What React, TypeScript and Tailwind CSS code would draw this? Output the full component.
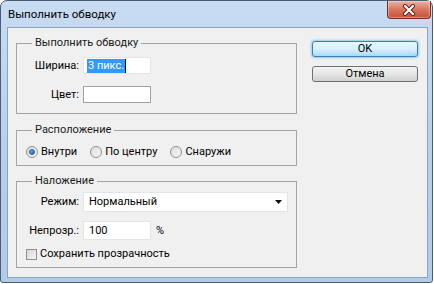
import React from "react";

function Radio({ checked, label, className = "" }: { checked?: boolean; label: string; className?: string }) {
  return (
    <div className={"flex items-center " + className}>
      <div className="w-[12px] h-[12px] rounded-full border border-[#8f8f8f] bg-gradient-to-br from-[#dcdcdc] to-[#f8f8f8] flex items-center justify-center">
        {checked && (
          <div className="w-[6px] h-[6px] rounded-full bg-gradient-to-br from-[#7ec0f5] to-[#0d5bb0] border border-[#1c5aa0]" />
        )}
      </div>
      <span className="ml-[3px] leading-[16px]">{label}</span>
    </div>
  );
}

function Group({ title, className = "", children }: { title: string; className?: string; children: React.ReactNode }) {
  return (
    <div className={"border border-[#a5a5a5] flex flex-col " + className}>
      <span className="-mt-[9px] ml-[15px] self-start px-[3px] h-[16px] leading-[16px] bg-[#f0f0f0] text-[#1b1b1b]">{title}</span>
      {children}
    </div>
  );
}

export default function App() {
  return (
    <div className="w-[434px] h-[284px] bg-white text-[11px] text-black font-['Roboto',sans-serif]">
      <div className="w-[433px] h-[283px] flex flex-col rounded-t-[7px] rounded-b-[3px] border border-[#4b5d74] bg-gradient-to-b from-[#c8dcf1] via-[#b7d0ec] to-[#b1cbe8]">
        {/* title bar */}
        <div className="h-[26px] flex items-start shrink-0">
          <span className="pl-[7px] pt-[5px] leading-[16px] text-[11.5px] text-black">Выполнить обводку</span>
          <div className="ml-auto mr-[1px] w-[44px] h-[18px] rounded-b-[4px] border border-t-0 border-[#7a2d1d] bg-gradient-to-b from-[#eab2a3] via-[#d8765f] to-[#c4502f] flex items-center justify-center shadow-[inset_0_0_1px_1px_rgba(255,255,255,0.35)]">
            <svg width="14" height="12" viewBox="0 0 14 12">
              <path d="M3 2 L11 10 M11 2 L3 10" stroke="#5b1f12" strokeWidth="4" strokeLinecap="round" />
              <path d="M3 2 L11 10 M11 2 L3 10" stroke="#ffffff" strokeWidth="2.2" strokeLinecap="round" />
            </svg>
          </div>
        </div>
        {/* client */}
        <div className="ml-[6px] mr-[4px] mb-[4px] flex-1 border border-[#8aa4c3] bg-[#f0f0f0] flex pl-[8px]">
          <div className="w-[281px] flex flex-col">
            {/* Group 1 */}
            <Group title="Выполнить обводку" className="mt-[15px] pt-0 pb-[10px]">
              <div className="mt-[6px] flex items-center h-[17px]">
                <span className="w-[62px] text-right leading-[16px]">Ширина:</span>
                <div className="ml-[4px] w-[68px] h-[17px] border border-[#e2e5ea] bg-white flex items-center pl-[3px]">
                  <span className="bg-[#3399ff] text-white leading-[14px] px-[1px]">3 пикс.</span>
                  <span className="w-[1px] h-[14px] bg-black" />
                </div>
              </div>
              <div className="flex items-center h-[17px] mt-[12px]">
                <span className="w-[62px] text-right leading-[16px]">Цвет:</span>
                <div className="ml-[4px] w-[68px] h-[17px] border border-[#a0a0a0] bg-white" />
              </div>
            </Group>
            {/* Group 2 */}
            <Group title="Расположение" className="mt-[16px] pb-[5px]">
              <div className="mt-[6px] pl-[9px] flex items-center h-[16px]">
                <Radio checked label="Внутри" />
                <Radio label="По центру" className="ml-[13px]" />
                <Radio label="Снаружи" className="ml-[13px]" />
              </div>
            </Group>
            {/* Group 3 */}
            <Group title="Наложение" className="mt-[15px] pb-[5px] pr-[8px]">
              <div className="mt-[3px] flex items-center h-[20px]">
                <span className="w-[62px] text-right leading-[16px]">Режим:</span>
                <div className="ml-[4px] flex-1 h-[20px] border border-[#e2e5ea] bg-white flex items-center pl-[5px] pr-[4px]">
                  <span className="leading-[16px]">Нормальный</span>
                  <svg className="ml-auto" width="8" height="5" viewBox="0 0 8 5">
                    <path d="M0 0 H7 L3.5 4 Z" fill="#111" />
                  </svg>
                </div>
              </div>
              <div className="flex items-center h-[19px] mt-[9px]">
                <span className="w-[62px] text-right leading-[16px]">Непрозр.:</span>
                <div className="ml-[4px] w-[68px] h-[19px] border border-[#e2e5ea] bg-white flex items-center pl-[5px]">
                  <span className="leading-[16px]">100</span>
                </div>
                <span className="ml-[5px] leading-[16px]">%</span>
              </div>
              <div className="flex items-center h-[16px] mt-[6px] pl-[9px]">
                <div className="w-[11px] h-[11px] border border-[#8f8f8f] bg-gradient-to-br from-[#d6d6d6] to-[#f6f6f6]" />
                <span className="ml-[3px] leading-[16px]">Сохранить прозрачность</span>
              </div>
            </Group>
          </div>
          {/* buttons */}
          <div className="ml-[15px] pt-[13px] flex flex-col">
            <div className="w-[106px] h-[16px] rounded-[3px] border border-[#3c7fb1] bg-gradient-to-b from-[#eaf6fd] via-[#d9f0fc] to-[#a7d9f5] shadow-[0_0_2px_1px_rgba(80,180,230,0.6)] flex items-center justify-center leading-[14px]">
              OK
            </div>
            <div className="mt-[9px] w-[106px] h-[16px] rounded-[3px] border border-[#707070] bg-gradient-to-b from-[#f2f2f2] via-[#e6e6e6] to-[#cfcfcf] flex items-center justify-center leading-[14px]">
              Отмена
            </div>
          </div>
        </div>
      </div>
    </div>
  );
}
